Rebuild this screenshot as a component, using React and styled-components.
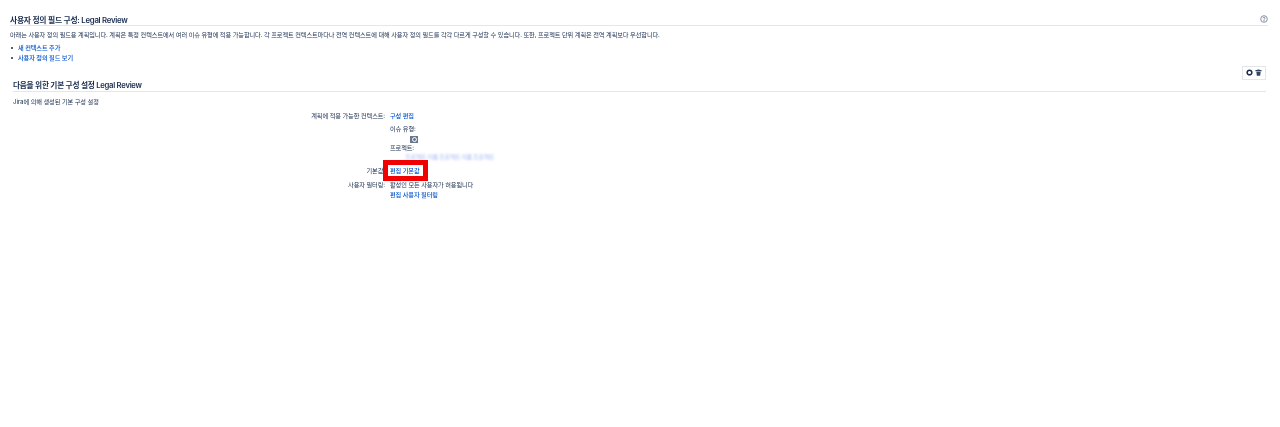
import React from 'react';
import styled, { createGlobalStyle } from 'styled-components';

const GlobalStyle = createGlobalStyle`
  html, body {
    margin: 0;
    background: #fff;
  }
  body {
    font-family: "Inter", "Noto Sans CJK KR", sans-serif;
    color: #172b4d;
  }
`;

const Page = styled.div`
  padding: 15px 12px 0 10px;
  font-size: 6.2px;
  letter-spacing: -0.1px;
  line-height: 9.5px;
  filter: blur(0.25px);
`;

const TitleBar = styled.div`
  display: flex;
  justify-content: space-between;
  align-items: center;
  height: 10px;
  border-bottom: 1px solid #e4e6ea;
`;

const Title = styled.h1`
  margin: 0;
  font-size: 7.8px;
  letter-spacing: -0.26px;
  line-height: 10px;
  font-weight: 600;
  color: #172b4d;
`;

const HelpIcon = styled.svg`
  width: 8px;
  height: 8px;
  margin-right: 0;
  position: relative;
  top: -1px;
`;

const Description = styled.p`
  margin: 4px 0 0;
`;

const LinkList = styled.ul`
  margin: 3px 0 0;
  padding: 0 0 0 1px;
  list-style: none;
`;

const LinkItem = styled.li`
  display: flex;
  align-items: center;
  gap: 5px;
  height: 10px;
  &::before {
    content: "";
    width: 2px;
    height: 2px;
    border-radius: 50%;
    background: #172b4d;
  }
`;

const Link = styled.a`
  color: #0052cc;
  font-weight: 500;
  text-decoration: none;
`;

const ToolRow = styled.div`
  display: flex;
  justify-content: flex-end;
  margin-top: 3px;
  padding-right: 2px;
`;

const ToolBox = styled.div`
  display: flex;
  align-items: center;
  gap: 2px;
  height: 12px;
  padding: 0 3px;
  border: 1px solid #e4e6ea;
`;

const SectionHead = styled.div`
  margin: 0 2px 0 3px;
  border-bottom: 1px solid #e4e6ea;
  height: 11px;
`;

const SectionTitle = styled.h2`
  margin: 0;
  font-size: 7.7px;
  letter-spacing: -0.27px;
  line-height: 11px;
  font-weight: 600;
  color: #172b4d;
`;

const SectionNote = styled.p`
  margin: 5px 0 0 3px;
`;

const Form = styled.div`
  margin-top: 5px;
  display: grid;
  grid-template-columns: 375px 1fr;
  column-gap: 5px;
  row-gap: 4.5px;
`;

const Label = styled.div`
  text-align: right;
`;

const Value = styled.div`
  display: flex;
  flex-direction: column;
  align-items: flex-start;
`;

const SubLabel = styled.div`
  margin-top: ${(p) => p.$top || 0}px;
`;

const IssueIcon = styled.div`
  width: 8px;
  height: 7px;
  margin: 2px 0 0 20px;
  background: #6b778c;
  display: flex;
  align-items: center;
  justify-content: center;
  &::after {
    content: "";
    width: 3px;
    height: 3px;
    border-radius: 50%;
    border: 1px solid #fff;
  }
`;

const BlurredName = styled.div`
  margin: 0 0 0 15px;
  height: 9.5px;
  white-space: nowrap;
  letter-spacing: -0.45px;
  color: #7f9cf0;
  filter: blur(1.3px);
  opacity: 0.65;
`;

const Highlighted = styled.span`
  position: relative;
  display: inline-block;
  &::after {
    content: "";
    position: absolute;
    left: -7px;
    right: -8px;
    top: -6px;
    bottom: -5.5px;
    border: 5px solid #f00000;
  }
`;

export default function App() {
  return (
    <Page>
      <GlobalStyle />
      <TitleBar>
        <Title>사용자 정의 필드 구성: Legal Review</Title>
        <HelpIcon viewBox="0 0 16 16" fill="none" stroke="#6b778c" strokeWidth="1.6">
          <circle cx="8" cy="8" r="6.6" />
          <path d="M6 6.4c0-1.2.9-1.9 2-1.9s2 .7 2 1.8c0 1.6-2 1.5-2 3.2" />
          <circle cx="8" cy="11.6" r=".5" />
        </HelpIcon>
      </TitleBar>
      <Description>
        아래는 사용자 정의 필드용 계획입니다. 계획은 특정 컨텍스트에서 여러 이슈 유형에 적용 가능합니다. 각 프로젝트 컨텍스트마다나 전역 컨텍스트에 대해 사용자 정의 필드를 각각 다르게 구성할 수 있습니다. 또한, 프로젝트 단위 계획은 전역 계획보다 우선합니다.
      </Description>
      <LinkList>
        <LinkItem><Link href="#">새 컨텍스트 추가</Link></LinkItem>
        <LinkItem><Link href="#">사용자 정의 필드 보기</Link></LinkItem>
      </LinkList>
      <ToolRow>
        <ToolBox>
          <svg width="7" height="7" viewBox="0 0 16 16" fill="none" stroke="#172b4d" strokeWidth="3.4">
            <circle cx="8" cy="8" r="5.4" />
          </svg>
          <svg width="7" height="7" viewBox="0 0 16 16" fill="#344563">
            <path d="M1 2.5h4.5V1h5v1.5H15v2.4H1zM3 6h10l-1.2 9.5H4.2z" />
          </svg>
        </ToolBox>
      </ToolRow>
      <SectionHead>
        <SectionTitle>다음을 위한 기본 구성 설정 Legal Review</SectionTitle>
      </SectionHead>
      <SectionNote>Jira에 의해 생성된 기본 구성 설정</SectionNote>
      <Form>
        <Label>계획에 적용 가능한 컨텍스트:</Label>
        <Value>
          <Link href="#">구성 편집</Link>
          <SubLabel $top={3.5}>이슈 유형:</SubLabel>
          <IssueIcon />
          <SubLabel>프로젝트:</SubLabel>
          <BlurredName>프로젝트 이름 프로젝트 이름 프로젝트</BlurredName>
        </Value>
        <Label>기본값:</Label>
        <Value>
          <Highlighted><Link href="#">편집 기본값</Link></Highlighted>
        </Value>
        <Label>사용자 필터링:</Label>
        <Value>
          <div>활성인 모든 사용자가 허용됩니다</div>
          <Link href="#">편집 사용자 필터링</Link>
        </Value>
      </Form>
    </Page>
  );
}
